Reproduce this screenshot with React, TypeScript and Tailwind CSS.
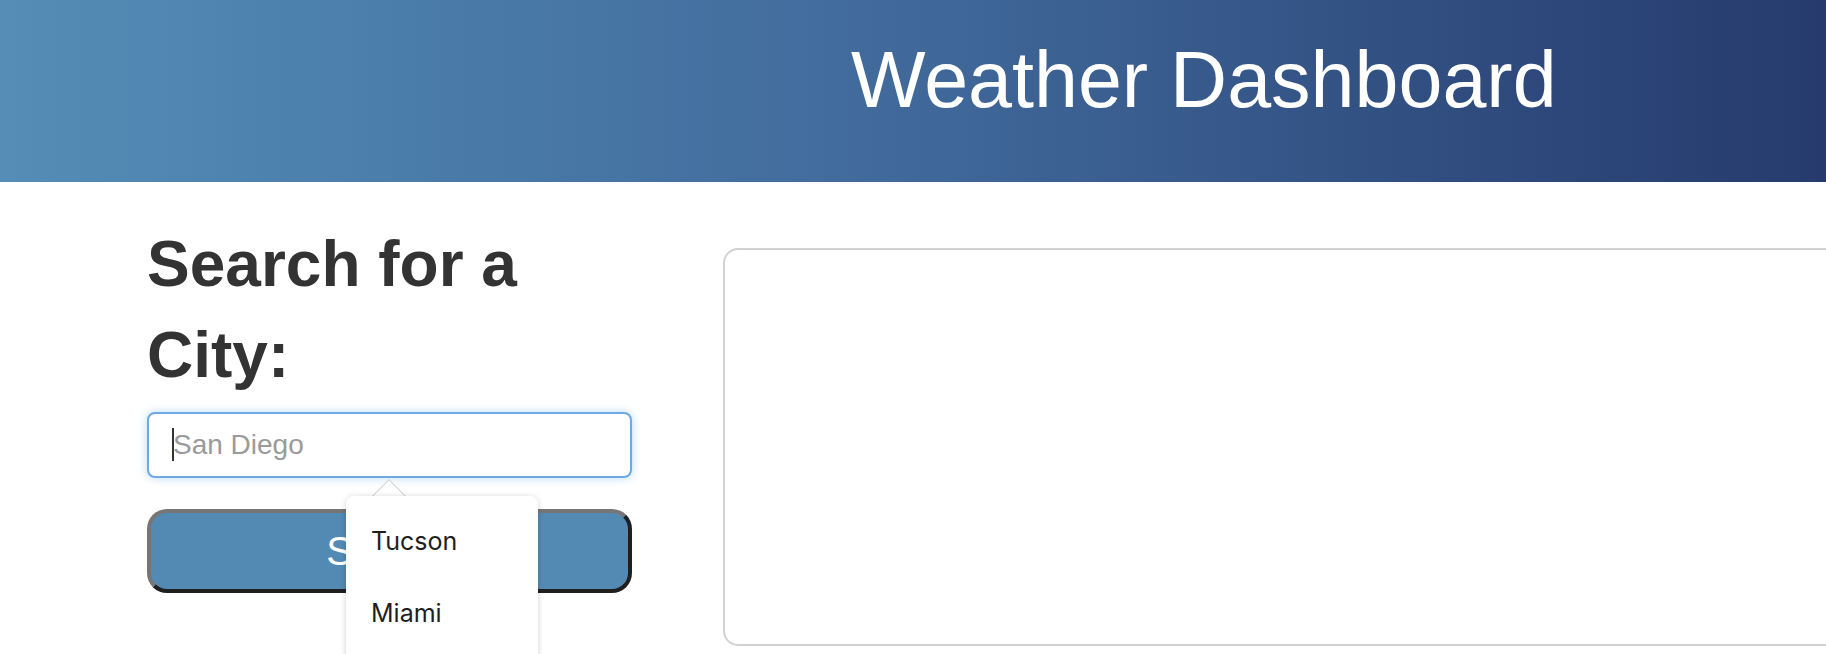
import React from 'react';

const cities = ['Tucson', 'Miami'];

const CityDropdown: React.FC = () => (
  <div className="absolute left-[199px] top-[67px] z-10">
    <div className="absolute left-[31px] top-[5px] h-[24px] w-[24px] rotate-45 border-l border-t border-[#d4d4d4] bg-white" />
    <div className="relative mt-[17px] w-[192px] rounded-[8px] bg-white pt-[9px] pb-[20px] shadow-[0_1px_6px_rgba(0,0,0,0.18)]">
      {cities.map((city) => (
        <div
          key={city}
          className="flex h-[72px] items-center pl-[25px] text-[25px] leading-[30px] text-[#1e1e1e] font-['Inter',sans-serif]"
        >
          {city}
        </div>
      ))}
    </div>
  </div>
);

export default function App() {
  return (
    <div className="h-[654px] w-[1826px] overflow-hidden bg-white font-['Liberation_Sans','Helvetica',sans-serif]">
      <header className="h-[182px] bg-gradient-to-r from-[#548db6] via-[#40699a] to-[#263a6d] pl-[851px] pt-[40px]">
        <h1 className="text-[79px] font-normal leading-none text-white">Weather Dashboard</h1>
      </header>

      <main className="flex">
        <section className="ml-[147px] w-[485px] shrink-0 pt-[37px]">
          <h2 className="text-[64px] font-bold leading-[91px] text-[#333333]">Search for a City:</h2>

          <div className="relative mt-[11px]">
            <input
              type="text"
              placeholder="San Diego"
              className="h-[66px] w-full rounded-[8px] border-2 border-[#6fa9e3] bg-white pl-[24px] text-[28px] text-[#555] shadow-[0_0_10px_rgba(102,175,233,0.45)] outline-none placeholder:text-[#9a9a9a]"
            />
            <span className="pointer-events-none absolute left-[25px] top-[16px] h-[33px] w-[2px] bg-[#333]" />
            <CityDropdown />
          </div>

          <button className="mt-[31px] h-[84px] w-full rounded-[20px] border-[4px] border-b-[#1f1f1f] border-l-[#767676] border-r-[#1f1f1f] border-t-[#767676] bg-[#538ab4] text-[40px] text-white">
            Search
          </button>
        </section>

        <section className="ml-[91px] mt-[66px] h-[398px] w-[1300px] shrink-0 rounded-[15px] border-2 border-[#d2d2d2] bg-white" />
      </main>
    </div>
  );
}
